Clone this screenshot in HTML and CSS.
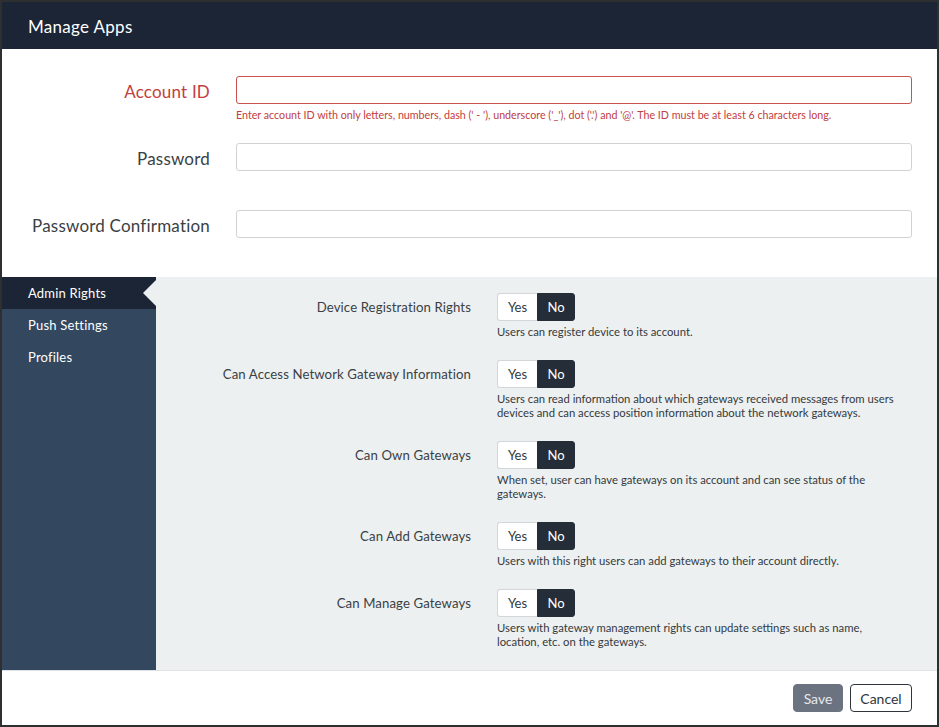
FILE: index.html
```html
<!DOCTYPE html>
<html>
<head>
<meta charset="utf-8">
<link rel="stylesheet" href="styles.css">
</head>
<body>
<div class="modal">
  <div class="modal-header">Manage Apps</div>
  <div class="form">
    <div class="form-row error">
      <label class="form-label">Account ID</label>
      <div class="field">
        <input class="input" type="text">
        <div class="help">Enter account ID with only letters, numbers, dash (' - '), underscore ('_'), dot ('.') and '@'. The ID must be at least 6 characters long.</div>
      </div>
    </div>
    <div class="form-row">
      <label class="form-label">Password</label>
      <div class="field">
        <input class="input" type="password">
        <div class="help"></div>
      </div>
    </div>
    <div class="form-row">
      <label class="form-label">Password Confirmation</label>
      <div class="field">
        <input class="input" type="password">
        <div class="help"></div>
      </div>
    </div>
  </div>
  <div class="tabs">
    <nav class="sidebar">
      <div class="tab active">Admin Rights</div>
      <div class="tab">Push Settings</div>
      <div class="tab">Profiles</div>
    </nav>
    <div class="rights">
      <div class="right-label">Device Registration Rights</div>
      <div class="right-field">
        <div class="toggle"><span class="opt yes">Yes</span><span class="opt no">No</span></div>
        <div class="desc">Users can register device to its account.</div>
      </div>
      <div class="right-label">Can Access Network Gateway Information</div>
      <div class="right-field">
        <div class="toggle"><span class="opt yes">Yes</span><span class="opt no">No</span></div>
        <div class="desc">Users can read information about which gateways received messages from users devices and can access position information about the network gateways.</div>
      </div>
      <div class="right-label">Can Own Gateways</div>
      <div class="right-field">
        <div class="toggle"><span class="opt yes">Yes</span><span class="opt no">No</span></div>
        <div class="desc">When set, user can have gateways on its account and can see status of the gateways.</div>
      </div>
      <div class="right-label">Can Add Gateways</div>
      <div class="right-field">
        <div class="toggle"><span class="opt yes">Yes</span><span class="opt no">No</span></div>
        <div class="desc">Users with this right users can add gateways to their account directly.</div>
      </div>
      <div class="right-label">Can Manage Gateways</div>
      <div class="right-field">
        <div class="toggle"><span class="opt yes">Yes</span><span class="opt no">No</span></div>
        <div class="desc">Users with gateway management rights can update settings such as name, location, etc. on the gateways.</div>
      </div>
    </div>
  </div>
  <div class="footer">
    <button class="btn save">Save</button>
    <button class="btn cancel">Cancel</button>
  </div>
</div>
</body>
</html>
```

FILE: styles.css
```css
* { box-sizing: border-box; }
html, body { margin: 0; padding: 0; }
body {
  background: #2e2f31;
  font-family: Lato, "Noto Sans", sans-serif;
  color: #343a40;
  padding: 2px;
  height: 727px;
  overflow: hidden;
}
.modal {
  width: 935px;
  height: 723px;
  background: #fff;
  display: flex;
  flex-direction: column;
}
.modal-header {
  height: 47px;
  background: #1b2536;
  color: #fff;
  font-size: 17px;
  padding: 2px 0 0 26px;
  display: flex;
  align-items: center;
  letter-spacing: 0.3px;
}
.form {
  padding: 27px 25px 0 0;
}
.form-row {
  display: grid;
  grid-template-columns: 208px 1fr;
  column-gap: 26px;
  margin-bottom: 22px;
}
.form-label {
  text-align: right;
  font-size: 17px;
  line-height: 28px;
  padding-top: 2px;
  color: #3a3f44;
  letter-spacing: 0.2px;
}
.field { display: flex; flex-direction: column; }
.input {
  height: 28px;
  border: 1px solid #cfd3d6;
  border-radius: 3px;
  background: #fff;
  font: inherit;
  outline: none;
}
.help {
  height: 17px;
  padding-top: 5px;
  font-size: 10.7px;
  line-height: 12px;
  white-space: nowrap;
}
.error .form-label { color: #c2403d; }
.error .input { border-color: #c9534f; }
.error .help { color: #c2403d; }

.tabs {
  display: flex;
  flex: 1;
  background: #edf0f1;
  border-bottom: 1px solid #dfe3e6;
}
.sidebar {
  width: 154px;
  background: #33475f;
  flex-shrink: 0;
}
.tab {
  height: 32px;
  line-height: 32px;
  padding-left: 26px;
  color: #fff;
  font-size: 13px;
  position: relative;
  letter-spacing: 0.2px;
}
.tab.active { background: #1b2536; }
.tab.active::after {
  content: "";
  position: absolute;
  right: 0;
  top: 3px;
  border-right: 13px solid #edf0f1;
  border-top: 13px solid transparent;
  border-bottom: 13px solid transparent;
}
.rights {
  flex: 1;
  display: grid;
  grid-template-columns: 315px 1fr;
  column-gap: 26px;
  row-gap: 21px;
  align-content: start;
  padding: 16px 25px 0 0;
}
.right-label {
  text-align: right;
  font-size: 13.2px;
  line-height: 28px;
  color: #3a3f44;
  letter-spacing: 0.1px;
}
.right-field { display: flex; flex-direction: column; align-items: flex-start; }
.toggle {
  display: flex;
  height: 28px;
}
.opt {
  font-size: 13px;
  line-height: 26px;
  text-align: center;
}
.opt.yes {
  width: 40px;
  background: #fff;
  border: 1px solid #d3d7da;
  border-right: none;
  border-radius: 3px 0 0 3px;
  color: #343a40;
}
.opt.no {
  width: 38px;
  background: #252e38;
  color: #fff;
  border: 1px solid #252e38;
  border-radius: 0 3px 3px 0;
}
.desc {
  margin-top: 4px;
  font-size: 11.3px;
  line-height: 14px;
  color: #343a40;
  max-width: 405px;
}
.footer {
  height: 54px;
  display: flex;
  justify-content: flex-end;
  align-items: flex-start;
  gap: 7px;
  padding: 13px 25px 0 0;
}
.btn {
  height: 28px;
  font-family: inherit;
  font-size: 14px;
  border-radius: 4px;
  padding: 0;
}
.btn.save {
  width: 50px;
  background: #6b7280;
  border: 1px solid #6b7280;
  color: #e6e8eb;
}
.btn.cancel {
  width: 62px;
  background: #fff;
  border: 1px solid #2f353b;
  color: #2f353b;
}
```
